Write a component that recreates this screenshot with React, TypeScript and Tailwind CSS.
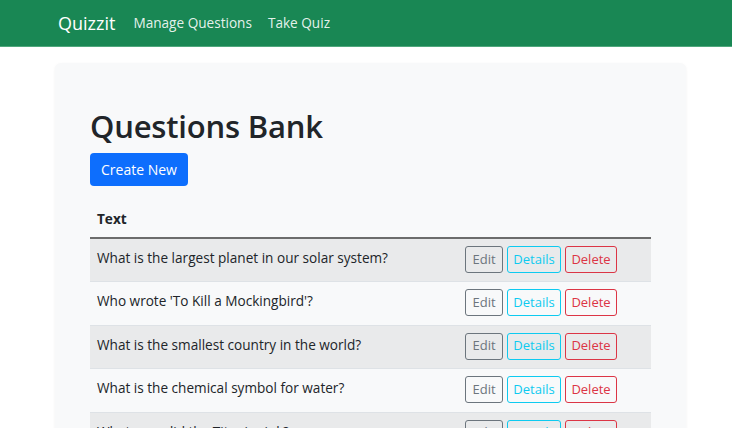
import React from "react";

const rows = [
  "What is the largest planet in our solar system?",
  "Who wrote 'To Kill a Mockingbird'?",
  "What is the smallest country in the world?",
  "What is the chemical symbol for water?",
  "What year did the Titanic sink?",
];

export default function App() {
  return (
    <div className="min-h-screen bg-white" style={{ fontFamily: '"Open Sans", "Noto Sans", sans-serif' }}>
      <nav className="h-[47px] bg-[#198754] border-b border-[#4fa77c] flex items-center pl-[58px]">
        <span className="text-[18px] text-white mr-[18px]">Quizzit</span>
        <a className="text-[13.6px] text-[rgba(255,255,255,0.9)] mr-[16px]">Manage Questions</a>
        <a className="text-[13.6px] text-[rgba(255,255,255,0.9)]">Take Quiz</a>
      </nav>
      <div className="pt-[16px] px-[55px]">
        <div className="w-[631px] bg-[#f8f9fa] rounded-[6px] shadow-[0_1px_3px_rgba(0,0,0,0.06)] px-[35px] pt-[44px] pb-[20px] h-[400px]">
          <h1 className="text-[31px] font-semibold text-[#212529] leading-[38px] tracking-[-0.2px]">Questions Bank</h1>
          <button className="mt-[8px] h-[33px] px-[11px] bg-[#0d6efd] text-white text-[14px] rounded-[4px]">Create New</button>
          <table className="mt-[16px] w-[561px] text-[13.6px] text-[#212529] border-collapse">
            <thead>
              <tr className="border-b-2 border-[#6c6c6c]">
                <th className="text-left font-bold px-[7px] h-[36px]">Text</th>
                <th></th>
              </tr>
            </thead>
            <tbody>
              {rows.map((r, i) => (
                <tr key={i} className={(i % 2 === 0 ? "bg-[#e9eaeb]" : "bg-[#f8f9fa]") + " border-b border-[#dee2e6]"}>
                  <td className="px-[7px] h-[43.5px] align-top pt-[9px]">{r}</td>
                  <td className="w-[186px] align-top pt-[7px]">
                    <div className="flex gap-[4px]">
                      <button className="h-[27px] w-[38px] border border-[#6c757d] text-[#6c757d] text-[13px] rounded-[3px]">Edit</button>
                      <button className="h-[27px] w-[54px] border border-[#0dcaf0] text-[#0dcaf0] text-[13px] rounded-[3px]">Details</button>
                      <button className="h-[27px] w-[52px] border border-[#dc3545] text-[#dc3545] text-[13px] rounded-[3px]">Delete</button>
                    </div>
                  </td>
                </tr>
              ))}
            </tbody>
          </table>
        </div>
      </div>
    </div>
  );
}
